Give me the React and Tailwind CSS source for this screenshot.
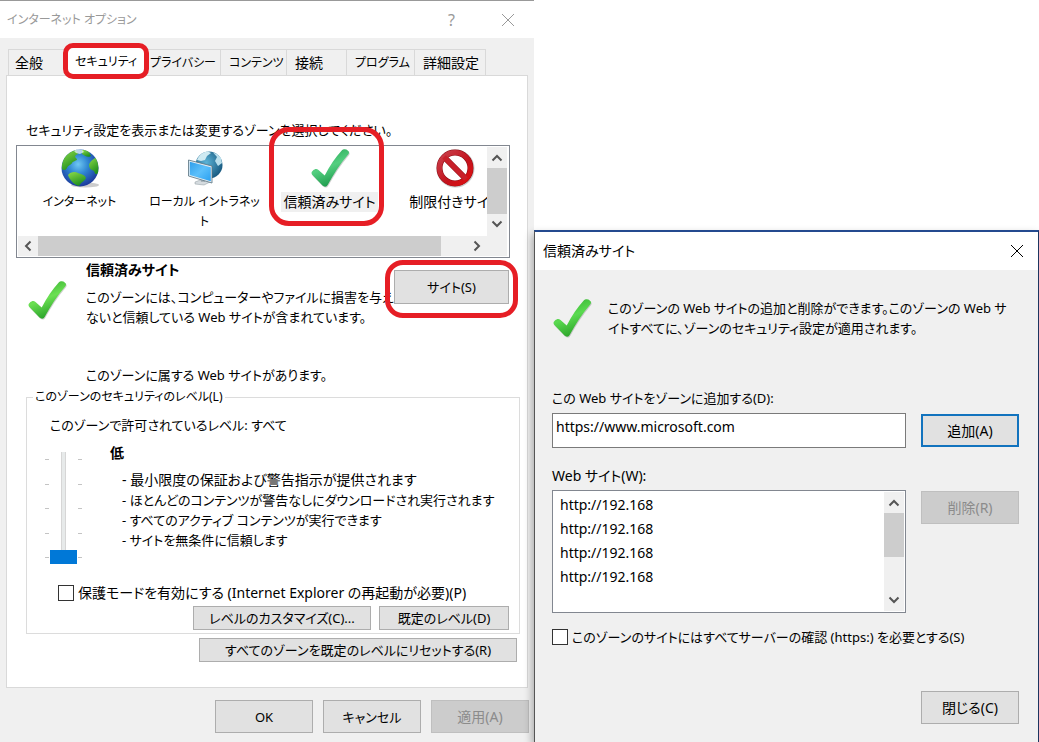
import { useState } from 'react';
import clsx from 'clsx';

const TABS = [
  { name: '全般', className: 'w-[58px] border-l pl-[6px] text-sm' },
  { name: 'セキュリティ', className: 'w-[80px] pl-[9px] text-xs', selected: true },
  { name: 'プライバシー', className: 'w-[75px] border-r pl-1 text-xs' },
  { name: 'コンテンツ', className: 'w-[66px] border-r pl-2 text-xs' },
  { name: '接続', className: 'w-[60px] border-r pl-2 text-sm' },
  { name: 'プログラム', className: 'w-[68px] border-r pl-2 text-xs' },
  { name: '詳細設定', className: 'w-[71px] border-r pl-2 text-sm' },
];

const LEVEL_NOTES = [
  { text: '最小限度の保証および警告指示が提供されます', size: 'text-sm' },
  { text: 'ほとんどのコンテンツが警告なしにダウンロードされ実行されます', size: 'text-[13px]' },
  { text: 'すべてのアクティブ コンテンツが実行できます', size: 'text-[13px]' },
  { text: 'サイトを無条件に信頼します', size: 'text-[13px]' },
];

const SITES = ['http://192.168', 'http://192.168', 'http://192.168', 'http://192.168'];

const CheckIcon = ({ id, from, to, className }) => (
  <svg viewBox="0 0 40 40" className={className} aria-hidden="true">
    <defs>
      <linearGradient id={id} x1="0" y1="0" x2="0.4" y2="1">
        <stop offset="0" stopColor={to} />
        <stop offset="0.55" stopColor={from} />
        <stop offset="1" stopColor={to} />
      </linearGradient>
    </defs>
    <path
      d="M3 22.500C1 24 1.200 25.500 2.400 27L12.500 37.500C14.500 39.200 16.500 39 17.800 36.800C23.500 26.500 30 16 38.200 6.500C39.400 5 39.300 3.800 38 2.700C36 1 33.500 .8 31.500 2.800C25.500 9.500 20 17.500 14.700 27.500L8.500 22C6.500 20.500 5 21 3 22.500Z"
      fill="#777"
      opacity="0.35"
      transform="translate(.6 .9)"
    />
    <path
      d="M3 22.500C1 24 1.200 25.500 2.400 27L12.500 37.500C14.500 39.200 16.500 39 17.800 36.800C23.500 26.500 30 16 38.200 6.500C39.400 5 39.300 3.800 38 2.700C36 1 33.500 .8 31.500 2.800C25.500 9.500 20 17.500 14.700 27.500L8.500 22C6.500 20.500 5 21 3 22.500Z"
      fill={`url(#${id})`}
    />
  </svg>
);

const GlobeIcon = () => (
  <svg viewBox="0 0 40 40" className="h-10 w-10" aria-hidden="true">
    <defs>
      <radialGradient id="ocean" cx="0.45" cy="0.4" r="0.6">
        <stop offset="0" stopColor="#6fc8f2" />
        <stop offset="0.45" stopColor="#2f86d2" />
        <stop offset="1" stopColor="#1c3a9c" />
      </radialGradient>
      <linearGradient id="land" x1="0" y1="0" x2="0.5" y2="1">
        <stop offset="0" stopColor="#8fdc4a" />
        <stop offset="1" stopColor="#1f8f1e" />
      </linearGradient>
      <clipPath id="globe-clip">
        <circle cx="20" cy="20" r="18.500" />
      </clipPath>
    </defs>
    <ellipse cx="25" cy="37" rx="14" ry="2.500" fill="#999" opacity="0.5" />
    <circle cx="20" cy="20" r="18.500" fill="url(#ocean)" />
    <g clipPath="url(#globe-clip)" fill="url(#land)">
      <path d="M2 21C1 10 8 3 16 2L18 6C15 7 14 9 17 11C17 13 13 13 12 15C11 17 8 17 7 20C6 22 4 23 2 21Z" />
      <path d="M22 2L28 2L31 8C28 10 25 8 22 6Z" />
      <path d="M38 9C34 10 30 13 29 17C29 21 32 22 34 23C35 26 36 28 39 24Z" />
      <path d="M8 27C10 24 15 23 18 25C21 26 25 27 26 30C25 33 21 34 19 38C15 37 10 33 8 27Z" />
    </g>
    <path d="M14 3C17 1 22 1 24 4L20 6L16 5Z" fill="#e8f6f4" opacity="0.75" />
  </svg>
);

const IntranetIcon = () => (
  <svg viewBox="0 0 40 40" className="h-10 w-10" aria-hidden="true">
    <defs>
      <radialGradient id="teal" cx="0.4" cy="0.4" r="0.65">
        <stop offset="0" stopColor="#5cb3d6" />
        <stop offset="1" stopColor="#17587f" />
      </radialGradient>
      <linearGradient id="screen" x1="0" y1="0" x2="1" y2="1">
        <stop offset="0" stopColor="#2f9eea" />
        <stop offset="0.5" stopColor="#5cc0fb" />
        <stop offset="1" stopColor="#2aa0f0" />
      </linearGradient>
    </defs>
    <circle cx="24" cy="17" r="13.500" fill="url(#teal)" />
    <path d="M12 12C14 7 18 4 23 3.500L26 5L22 8L20 12L16 13Z" fill="#cfeaf2" />
    <path d="M28 4.500L32 6L36 10L37 15L33 18L30 13L32 9Z" fill="#b9dfec" />
    <path d="M10 34L18 31L25 34L19 37L10 36Z" fill="#d5dbdf" stroke="#8d989f" strokeWidth="0.5" />
    <path d="M15 29L20 30L20 34L16 34Z" fill="#aab4bb" />
    <path d="M3.500 12L27 18L27 35L3.500 28Z" fill="#e6edf2" stroke="#56717f" strokeWidth="0.8" />
    <path d="M4.800 13.700L25.800 19.200L25.800 33.300L4.800 27Z" fill="url(#screen)" />
  </svg>
);

const ForbiddenIcon = () => (
  <svg viewBox="0 0 40 40" className="h-10 w-10" aria-hidden="true">
    <defs>
      <linearGradient id="ban" x1="0" y1="0" x2="1" y2="1">
        <stop offset="0" stopColor="#c9414d" />
        <stop offset="0.6" stopColor="#c4121c" />
        <stop offset="1" stopColor="#e01010" />
      </linearGradient>
    </defs>
    <circle cx="20.500" cy="20.500" r="16" fill="none" stroke="#999" strokeWidth="6" opacity="0.5" />
    <circle cx="20" cy="20" r="15.500" fill="#fff" stroke="#8e0c14" strokeWidth="6" />
    <path d="M9 9L31 31" stroke="#8e0c14" strokeWidth="6" />
    <circle cx="20" cy="20" r="15.500" fill="none" stroke="url(#ban)" strokeWidth="5" />
    <path d="M9 9L31 31" stroke="#c8202a" strokeWidth="5" />
  </svg>
);

const CloseIcon = () => (
  <svg viewBox="0 0 14 14" className="h-[14px] w-[14px]" fill="none" stroke="currentColor" aria-hidden="true">
    <path d="M1 1L13 13M13 1L1 13" />
  </svg>
);

const ARROWS = {
  up: 'M1.500 8.500L6 4L10.500 8.500',
  down: 'M1.500 3.500L6 8L10.500 3.500',
  left: 'M8.500 1.500L4 6L8.500 10.500',
  right: 'M3.500 1.500L8 6L3.500 10.500',
};

const ScrollButton = ({ dir, label }) => (
  <button type="button" aria-label={label} className="flex h-5 w-5 shrink-0 items-center justify-center text-[#555]">
    <svg viewBox="0 0 12 12" className="h-3 w-3" fill="none" stroke="currentColor" strokeWidth="2">
      <path d={ARROWS[dir]} />
    </svg>
  </button>
);

const Highlight = ({ className }) => (
  <span aria-hidden="true" className={clsx('pointer-events-none absolute z-10 border-[5px] border-[#e61e25]', className)} />
);

const Button = ({ className, primary, children, ...props }) => (
  <button
    type="button"
    className={clsx(
      'flex items-center justify-center bg-[#e1e1e1] whitespace-nowrap disabled:border-[#bfbfbf] disabled:bg-[#ccc] disabled:text-[#8b8b8b]',
      primary ? 'border-2 border-[#1273be]' : 'border border-[#adadad]',
      className
    )}
    {...props}
  >
    {children}
  </button>
);

const Checkbox = ({ label, className }) => (
  <label className={clsx('flex items-center gap-1 whitespace-nowrap', className)}>
    <input type="checkbox" className="h-4 w-4 shrink-0 appearance-none border border-[#333] bg-white checked:bg-[#0078d7]" />
    {label}
  </label>
);

const ZONES = [
  { name: 'インターネット', icon: <GlobeIcon />, size: 'text-xs' },
  { name: 'ローカル イントラネット', icon: <IntranetIcon />, size: 'text-xs' },
  {
    name: '信頼済みサイト',
    icon: <CheckIcon id="zone-check" from="#54cf80" to="#1f9d4e" className="h-10 w-10" />,
    size: 'text-sm',
    selected: true,
  },
  { name: '制限付きサイト', icon: <ForbiddenIcon />, size: 'text-sm' },
];

const ZoneList = () => (
  <div className="border border-[#828790] bg-white pt-px pr-px pb-px">
    <div className="flex">
      <ul className="flex h-[89px] min-w-0 flex-1 overflow-hidden">
        {ZONES.map((zone) => (
          <li key={zone.name} className="flex w-[125px] shrink-0 flex-col items-center pt-px text-center">
            {zone.icon}
            <span className={clsx('mt-1 max-w-[116px] px-[2px] leading-5', zone.size, zone.selected && 'bg-[#f0f0f0]')}>
              {zone.name}
            </span>
          </li>
        ))}
      </ul>
      <div className="mr-px flex w-5 flex-col bg-[#f0f0f0] pt-px">
        <ScrollButton dir="up" label="上へ" />
        <div className="h-[46px] bg-[#cdcdcd]" />
        <ScrollButton dir="down" label="下へ" />
      </div>
    </div>
    <div className="mr-px ml-px flex h-5 items-center bg-[#f0f0f0] pr-5">
      <ScrollButton dir="left" label="左へ" />
      <div className="h-full flex-1">
        <div className="h-full w-[94%] bg-[#cdcdcd]" />
      </div>
      <ScrollButton dir="right" label="右へ" />
    </div>
  </div>
);

const SliderTicks = () => (
  <div className="flex flex-col justify-between pt-[7px] pb-[6px]">
    {[0, 1, 2, 3, 4].map((i) => (
      <span key={i} className="h-px w-1 bg-[#c4c4c4]" />
    ))}
  </div>
);

const LevelSlider = () => {
  const [level, setLevel] = useState(0);

  return (
    <div className="flex h-[112px] gap-px">
      <SliderTicks />
      <input
        type="range"
        min="0"
        max="4"
        value={level}
        onChange={(e) => setLevel(Number(e.target.value))}
        aria-label="このゾーンのセキュリティのレベル"
        className="m-0 h-[112px] w-[27px] appearance-none bg-[linear-gradient(to_right,transparent_11px,#d6d6d6_11px,#d6d6d6_12px,#e7eaea_12px,#e7eaea_15px,#d6d6d6_15px,#d6d6d6_16px,transparent_16px)] [direction:rtl] [writing-mode:vertical-lr] [&::-webkit-slider-thumb]:h-[14px] [&::-webkit-slider-thumb]:w-[27px] [&::-webkit-slider-thumb]:appearance-none [&::-webkit-slider-thumb]:bg-[#0078d7]"
      />
      <SliderTicks />
    </div>
  );
};

const InternetOptions = () => (
  <section className="flex min-w-0 flex-col border-t border-[#999] bg-[#f0f0f0]">
    <header className="flex h-[37px] items-center bg-white pr-[19px] pl-[7px] text-[#999]">
      <h1 className="flex-1 text-xs">インターネット オプション</h1>
      <button type="button" aria-label="ヘルプ" className="mr-[46px] text-base">?</button>
      <button type="button" aria-label="閉じる"><CloseIcon /></button>
    </header>

    <div className="flex flex-1 flex-col px-[6px] pt-[9px]">
      <nav role="tablist" className="flex items-end pl-[2px]">
        {TABS.map((tab) => (
          <button
            key={tab.name}
            type="button"
            role="tab"
            aria-selected={!!tab.selected}
            className={clsx(
              'relative flex shrink-0 items-center whitespace-nowrap border-t border-[#d9d9d9]',
              tab.selected ? '-mb-px h-[29px] bg-white' : 'h-[26px]',
              tab.className
            )}
          >
            {tab.name}
            {tab.selected && <Highlight className="-inset-x-[3px] -top-[5px] -bottom-[3px] rounded-[10px]" />}
          </button>
        ))}
      </nav>

      <div className="flex flex-col border border-[#d9d9d9] bg-white pb-[25px]">
        <p className="mt-[44px] ml-[19px] whitespace-nowrap">
          セキュリティ設定を表示または変更するゾーンを選択してください。
        </p>
        <div className="relative mt-[5px] mr-[17px] ml-[9px]">
          <ZoneList />
          <Highlight className="-top-[18px] left-[253px] h-[99px] w-[115px] rounded-[20px]" />
        </div>

        <div className="mt-[2px] flex pr-[18px] pl-5">
          <CheckIcon id="detail-check" from="#6be052" to="#2aa32a" className="mt-5 h-10 w-10 shrink-0" />
          <div className="ml-[19px] min-w-0 flex-1 whitespace-nowrap">
            <h2 className="text-sm leading-5 font-bold">信頼済みサイト</h2>
            <p className="mt-[7px]">
              このゾーンには、コンピューターやファイルに損害を与え
              <br />
              ないと信頼している Web サイトが含まれています。
            </p>
            <p className="mt-[38px]">このゾーンに属する Web サイトがあります。</p>
          </div>
          <div className="relative mt-[10px] h-[34px] w-[115px] shrink-0">
            <Button className="h-full w-full">サイト(S)</Button>
            <Highlight className="-top-[10px] -right-[9px] -bottom-[14px] -left-[9px] rounded-[18px]" />
          </div>
        </div>

        <fieldset className="mt-[2px] mr-[7px] ml-[19px] min-w-0 border border-[#dcdcdc] pr-[10px] pb-[3px] pl-[18px]">
          <legend className="-ml-[12px] px-[2px] text-xs leading-5">このゾーンのセキュリティのレベル(L)</legend>
          <p className="mt-2 ml-[5px]">このゾーンで許可されているレベル: すべて</p>
          <div className="mt-2 flex">
            <div className="mt-[9px]"><LevelSlider /></div>
            <div className="ml-7 whitespace-nowrap">
              <h3 className="text-sm leading-5 font-bold">低</h3>
              <ul className="mt-[7px] ml-3">
                {LEVEL_NOTES.map((note) => (
                  <li key={note.text} className={clsx('leading-5', note.size)}>- {note.text}</li>
                ))}
              </ul>
            </div>
          </div>
          <Checkbox
            label="保護モードを有効にする (Internet Explorer の再起動が必要)(P)"
            className="mt-[19px] ml-[13px] text-sm leading-5"
          />
          <div className="mt-[3px] flex justify-end gap-2">
            <Button className="h-6 w-[178px]">レベルのカスタマイズ(C)...</Button>
            <Button className="h-6 w-[130px]">既定のレベル(D)</Button>
          </div>
        </fieldset>

        <Button className="mt-1 mr-[10px] h-6 w-[318px] self-end">すべてのゾーンを既定のレベルにリセットする(R)</Button>
      </div>

      <footer className="mt-3 -mr-px flex justify-end gap-[10px] pb-2">
        <Button className="h-[33px] w-[98px]">OK</Button>
        <Button className="h-[33px] w-[98px]">キャンセル</Button>
        <Button className="h-[33px] w-[98px] text-sm" disabled>適用(A)</Button>
      </footer>
    </div>
  </section>
);

const TrustedSites = () => {
  const [url, setUrl] = useState('https://www.microsoft.com');

  return (
    <section className="relative mt-[230px] flex min-w-0 flex-col border-t-2 border-r border-l border-t-[#244a8f] border-r-[#1b3560] border-l-[#555] bg-[#f0f0f0] shadow-[-2px_4px_8px_rgba(0,0,0,0.3)]">
      <header className="flex h-[38px] items-center bg-white pr-[14px] pl-2">
        <h1 className="flex-1 text-sm">信頼済みサイト</h1>
        <button type="button" aria-label="閉じる"><CloseIcon /></button>
      </header>

      <div className="flex flex-1 flex-col pr-[19px] pl-[17px]">
        <div className="mt-7 flex">
          <CheckIcon id="dialog-check" from="#5ada50" to="#2ea52b" className="h-10 w-10 shrink-0" />
          <p className="ml-4 whitespace-nowrap">
            このゾーンの Web サイトの追加と削除ができます。このゾーンの Web サ
            <br />
            イトすべてに、ゾーンのセキュリティ設定が適用されます。
          </p>
        </div>

        <label htmlFor="site-url" className="mt-[50px]">この Web サイトをゾーンに追加する(D):</label>
        <div className="mt-[5px] flex items-start gap-[15px]">
          <input
            id="site-url"
            type="text"
            value={url}
            onChange={(e) => setUrl(e.target.value)}
            className="h-[35px] min-w-0 flex-1 border border-[#7a7a7a] bg-white px-[3px] pb-2 text-sm"
          />
          <Button primary className="mt-px h-[33px] w-[98px] text-sm">追加(A)</Button>
        </div>

        <h2 className="mt-[18px] text-sm leading-5">Web サイト(W):</h2>
        <div className="mt-1 flex items-start gap-[15px]">
          <div className="flex h-[123px] min-w-0 flex-1 border border-[#828790] bg-white py-px pr-px">
            <ul className="flex-1 pt-px pl-[7px] text-sm leading-6">
              {SITES.map((site, i) => (
                <li key={i}>{site}</li>
              ))}
            </ul>
            <div className="flex w-5 flex-col bg-[#f0f0f0] py-px">
              <ScrollButton dir="up" label="上へ" />
              <div className="mb-auto h-11 bg-[#cdcdcd]" />
              <ScrollButton dir="down" label="下へ" />
            </div>
          </div>
          <Button className="mt-px h-[33px] w-[98px] text-sm" disabled>削除(R)</Button>
        </div>

        <Checkbox label="このゾーンのサイトにはすべてサーバーの確認 (https:) を必要とする(S)" className="mt-[14px]" />
        <Button className="mt-11 mb-[18px] h-[33px] w-[98px] self-end text-sm">閉じる(C)</Button>
      </div>
    </section>
  );
};

const App = () => (
  <main className="grid min-h-screen grid-cols-[534fr_505fr] overflow-hidden bg-white font-['Noto_Sans','Noto_Sans_CJK_JP',sans-serif] text-[13px] leading-5 text-black [font-feature-settings:'palt']">
    <InternetOptions />
    <TrustedSites />
  </main>
);

export default App;
